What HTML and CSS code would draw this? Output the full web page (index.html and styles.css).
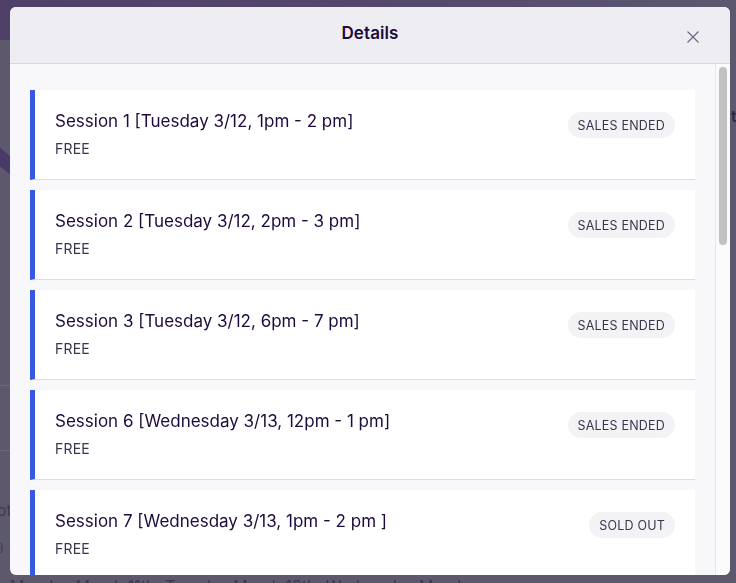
FILE: index.html
```html
<!DOCTYPE html>
<html lang="en">
<head>
<meta charset="utf-8">
<title>Details</title>
<link rel="stylesheet" href="styles.css">
</head>
<body>
<div class="backdrop">
  <div class="bg-top"></div>
  <div class="bg-shape"></div>
  <div class="bg-line bg-line-a"></div>
  <div class="bg-line bg-line-b"></div>
  <div class="bg-frag bg-frag-a">ot</div>
  <div class="bg-frag bg-frag-b">9 E</div>
  <div class="bg-frag bg-frag-c">t</div>
  <div class="bg-bottom">Monday March 11th, Tuesday March 12th, Wednesday March</div>
</div>
<div class="modal" role="dialog" aria-label="Details">
  <header class="modal-header">
    <h2 class="modal-title">Details</h2>
    <button class="close" aria-label="Close">
      <svg width="14" height="14" viewBox="0 0 14 14"><path d="M1.5 1.5 L12.5 12.5 M12.5 1.5 L1.5 12.5" stroke="#6b6780" stroke-width="1.2" fill="none"/></svg>
    </button>
  </header>
  <div class="modal-body">
    <div class="list">
      <div class="card"><div class="info"><div class="name">Session 1 [Tuesday 3/12, 1pm - 2 pm]</div><div class="price">FREE</div></div><span class="badge">SALES ENDED</span></div>
      <div class="card"><div class="info"><div class="name">Session 2 [Tuesday 3/12, 2pm - 3 pm]</div><div class="price">FREE</div></div><span class="badge">SALES ENDED</span></div>
      <div class="card"><div class="info"><div class="name">Session 3 [Tuesday 3/12, 6pm - 7 pm]</div><div class="price">FREE</div></div><span class="badge">SALES ENDED</span></div>
      <div class="card"><div class="info"><div class="name">Session 6 [Wednesday 3/13, 12pm - 1 pm]</div><div class="price">FREE</div></div><span class="badge">SALES ENDED</span></div>
      <div class="card"><div class="info"><div class="name">Session 7 [Wednesday 3/13, 1pm - 2 pm ]</div><div class="price">FREE</div></div><span class="badge">SOLD OUT</span></div>
      <div class="card"><div class="info"><div class="name">Session 8 [Wednesday 3/13, 2pm - 3 pm]</div><div class="price">FREE</div></div><span class="badge">SOLD OUT</span></div>
    </div>
    <div class="scrollbar"><div class="thumb"></div></div>
  </div>
</div>
</body>
</html>
```
FILE: styles.css
```css
* { box-sizing: border-box; }
html, body { margin: 0; padding: 0; height: 100%; overflow: hidden; }
body {
  background: #5d586c;
  font-family: Inter, "Noto Sans", sans-serif;
  color: #1e0a3c;
}
.backdrop { position: fixed; inset: 0; }
.bg-top {
  position: absolute; left: 0; right: 0; top: 0; height: 40px;
  background: linear-gradient(90deg, #4f4068 0%, #54476b 50%, #5c5870 100%);
}
.bg-shape {
  position: absolute; left: -20px; top: 150px; width: 40px; height: 14px;
  background: #4a3a6a; transform: rotate(40deg);
}
.bg-line { position: absolute; height: 1px; background: #6c6879; }
.bg-line-a { left: 0; width: 12px; top: 385px; }
.bg-line-b { left: 0; width: 12px; top: 450px; }
.bg-frag { position: absolute; font-size: 16px; color: #403a52; }
.bg-frag-a { left: -3px; top: 500px; }
.bg-frag-b { left: -6px; top: 538px; color: #4a4558; }
.bg-frag-c { left: 731px; top: 106px; font-weight: 600; color: #2e2548; }
.bg-bottom {
  position: absolute; left: 10px; top: 576px; font-size: 16px; color: #3e3850; white-space: nowrap;
}
.modal {
  position: fixed; left: 10px; top: 7px; width: 720px; height: 568px;
  background: #f8f8fa; border-radius: 6px; overflow: hidden;
  display: flex; flex-direction: column;
}
.modal-header {
  height: 57px; flex: none;
  background: #eeedf2; border-bottom: 1px solid #d8d7de;
  display: flex; align-items: center; justify-content: center;
  position: relative;
}
.modal-title {
  margin: 0 0 4px; font-size: 17px; font-weight: 600; color: #1e0a3c; letter-spacing: 0.1px;
}
.close {
  position: absolute; right: 30px; top: 23px; width: 14px; height: 14px;
  padding: 0; border: 0; background: none; display: flex;
}
.modal-body {
  flex: 1; min-height: 0;
  display: flex;
}
.list {
  flex: 1; min-width: 0; overflow: hidden;
  padding: 26px 20px 0 20px;
  display: flex; flex-direction: column; gap: 10px;
}
.scrollbar {
  flex: none; width: 15px;
  background: #fafafa; border-left: 1px solid #e6e6ea;
  padding: 3px;
}
.thumb { width: 8px; height: 178px; border-radius: 4px; background: #c1c1c1; }
.card {
  flex: none; height: 90px;
  background: #fff; border-left: 5px solid #3659e3; border-bottom: 1px solid #dfdee4;
  display: flex; justify-content: space-between; align-items: flex-start;
  padding: 21px 20px 0 20px;
}
.info { display: flex; flex-direction: column; }
.name { font-size: 17px; line-height: 20px; color: #1e0a3c; }
.price { font-size: 14px; line-height: 18px; margin-top: 9px; color: #39364f; letter-spacing: 0.2px; }
.badge {
  height: 26px; padding: 0 10px; margin-top: 1px; border-radius: 13px;
  background: #f3f3f6; color: #39364f; font-size: 12.5px; letter-spacing: 0.2px;
  display: flex; align-items: center; white-space: nowrap;
}
```
